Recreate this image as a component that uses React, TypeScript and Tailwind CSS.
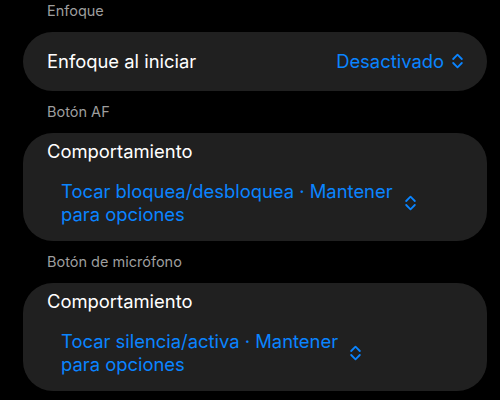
import React from 'react';

const font = { fontFamily: 'Inter, "Noto Sans", sans-serif' };

function UpDown() {
  return (
    <svg width="11" height="16" viewBox="0 0 11 16" fill="none" className="shrink-0">
      <path d="M1.2 6 L5.5 1.7 L9.8 6" stroke="#0a84ff" strokeWidth="1.8" strokeLinecap="round" strokeLinejoin="round" />
      <path d="M1.2 10 L5.5 14.3 L9.8 10" stroke="#0a84ff" strokeWidth="1.8" strokeLinecap="round" strokeLinejoin="round" />
    </svg>
  );
}

function SectionTitle({ children, first }: { children: React.ReactNode; first?: boolean }) {
  return (
    <div className={`pl-[47px] text-[14.5px] leading-[20px] text-[#9e9e9e] ${first ? 'pt-[1px] pb-[11px]' : 'py-[11px]'}`}>
      {children}
    </div>
  );
}

function BehaviourCard({ line1, line2 }: { line1: string; line2: string }) {
  return (
    <div className="ml-[23px] mr-[13px] h-[108px] rounded-[30px] bg-[#202020] pl-[24px] pt-[7px]">
      <div className="text-[18.4px] leading-[23px] text-white">Comportamiento</div>
      <div className="mt-[17px] pl-[14px] flex items-center gap-[12px]">
        <div className="text-[18.4px] leading-[23px] text-[#0a84ff]">
          {line1}
          <br />
          {line2}
        </div>
        <UpDown />
      </div>
    </div>
  );
}

export default function App() {
  return (
    <div className="w-[500px] h-[400px] bg-black overflow-hidden" style={font}>
      <SectionTitle first>Enfoque</SectionTitle>
      <div className="ml-[23px] mr-[13px] h-[59px] rounded-full bg-[#202020] flex items-center justify-between pl-[24px] pr-[24px]">
        <span className="text-[18.4px] text-white">Enfoque al iniciar</span>
        <div className="flex items-center gap-[8px]">
          <span className="text-[18.4px] text-[#0a84ff]">Desactivado</span>
          <UpDown />
        </div>
      </div>
      <SectionTitle>Botón AF</SectionTitle>
      <BehaviourCard line1="Tocar bloquea/desbloquea · Mantener" line2="para opciones" />
      <SectionTitle>Botón de micrófono</SectionTitle>
      <BehaviourCard line1="Tocar silencia/activa · Mantener" line2="para opciones" />
    </div>
  );
}
